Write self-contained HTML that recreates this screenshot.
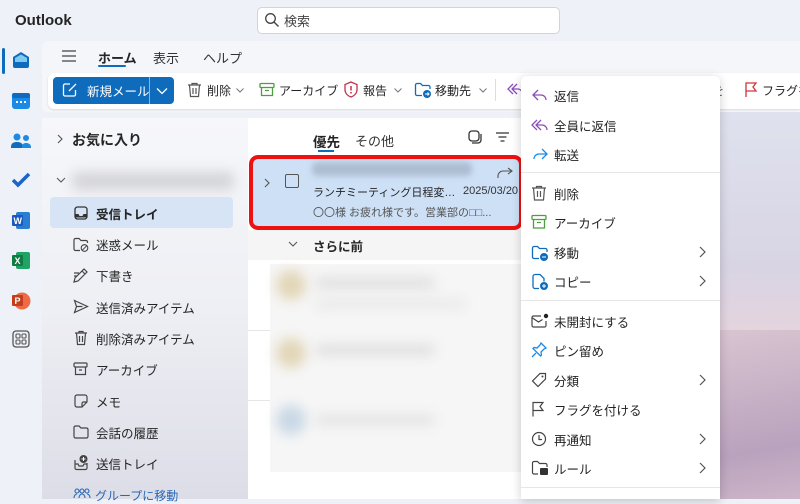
<!DOCTYPE html>
<html><head><meta charset="utf-8">
<style>
*{box-sizing:border-box;margin:0;padding:0}
body{width:800px;height:499px;overflow:hidden;position:relative;background:#eef1f7;font-family:"Liberation Sans","Noto Sans CJK JP",sans-serif;color:#242424;font-size:13px}
.a{position:absolute}
.ic{position:absolute}
.fold{position:absolute;left:50px;width:183px;height:30px;font-size:12.5px;display:flex;align-items:center;padding-left:46px}
.mi{position:absolute;left:0;width:199px;height:30px;display:flex;align-items:center;padding-left:33px;font-size:12.5px}
.mi svg{position:absolute;left:10px;top:7px}
.chev{position:absolute;right:14px;top:9px}
.blur{position:absolute;filter:blur(6px);border-radius:6px}
</style></head><body>
<div class="a" style="left:720px;top:110px;width:80px;height:389px;background:linear-gradient(180deg,#dfe2ee 0%,#d8d4e4 40%,#e6d4dc 60%,#c9cbd9 75%,#d7c3d3 100%)"></div>
<div class="a" style="left:720px;top:330px;width:80px;height:169px;background:linear-gradient(170deg,#d9c4d1,#b9a2bd 70%,#cdb6c9)"></div>
<div class="a" style="left:15px;top:12px;font-size:15px;font-weight:bold;color:#242424">Outlook</div>
<div class="a" style="left:257px;top:7px;width:303px;height:27px;background:#fff;border:1px solid #cfd3da;border-radius:5px"></div>
<svg class="ic" style="left:264px;top:12px" width="16" height="16" viewBox="0 0 16 16"><circle cx="6.5" cy="6.5" r="4.8" fill="none" stroke="#444" stroke-width="1.3"/><path d="M10 10l4.5 4.5" stroke="#444" stroke-width="1.4"/></svg>
<div class="a" style="left:284px;top:11px;font-size:13px;color:#444">検索</div>
<div class="a" style="left:2px;top:48px;width:3px;height:26px;background:#0f6cbd;border-radius:2px"></div>
<svg class="ic" style="left:10px;top:49px" width="22" height="22" viewBox="0 0 22 22"><path d="M3 8l8-5 8 5v9a2 2 0 0 1-2 2H5a2 2 0 0 1-2-2z" fill="#0f6cbd"/><path d="M5 9l6-3.5 6 3.5v4H5z" fill="#7fcaf0"/></svg>
<svg class="ic" style="left:11px;top:91px" width="20" height="20"><rect x="1" y="2" width="18" height="16" rx="3" fill="#1b8ae6"/><rect x="1" y="2" width="18" height="5" rx="2" fill="#0f6cbd"/><g fill="#fff"><rect x="5" y="10" width="2" height="2"/><rect x="9" y="10" width="2" height="2"/><rect x="13" y="10" width="2" height="2"/></g></svg>
<svg class="ic" style="left:10px;top:131px" width="22" height="20"><circle cx="7" cy="6" r="3.5" fill="#1b8ae6"/><circle cx="16" cy="7" r="3" fill="#1b8ae6"/><path d="M1 16c0-4 3-5 6-5s6 1 6 5v1H1z" fill="#0f6cbd"/><path d="M12 16c0-3 2-4 4-4s5 1 5 4v1h-9z" fill="#1b8ae6"/></svg>
<svg class="ic" style="left:11px;top:172px" width="20" height="16"><path d="M2 8l5 5L18 2" fill="none" stroke="#1b64c8" stroke-width="3.5"/></svg>
<svg class="ic" style="left:11px;top:211px" width="20" height="19"><rect x="5" y="1" width="14" height="17" rx="2" fill="#2b7cd3"/><rect x="1" y="4" width="11" height="11" rx="1" fill="#185abd"/><text x="2.5" y="13" font-size="9" font-weight="bold" fill="#fff" font-family="Liberation Sans">W</text></svg>
<svg class="ic" style="left:11px;top:251px" width="20" height="19"><rect x="5" y="1" width="14" height="17" rx="2" fill="#21a366"/><rect x="1" y="4" width="11" height="11" rx="1" fill="#107c41"/><text x="3.5" y="13" font-size="9" font-weight="bold" fill="#fff" font-family="Liberation Sans">X</text></svg>
<svg class="ic" style="left:11px;top:291px" width="20" height="19"><circle cx="11" cy="10" r="8.5" fill="#ed6c47"/><rect x="1" y="4" width="11" height="11" rx="1" fill="#c43e1c"/><text x="3.5" y="13" font-size="9" font-weight="bold" fill="#fff" font-family="Liberation Sans">P</text></svg>
<svg class="ic" style="left:12px;top:330px" width="18" height="18"><rect x="1" y="1" width="16" height="16" rx="3" fill="none" stroke="#555" stroke-width="1.3"/><g fill="none" stroke="#555" stroke-width="1.1"><rect x="4" y="4" width="4" height="4" rx="1"/><rect x="10" y="4" width="4" height="4" rx="1"/><rect x="4" y="10" width="4" height="4" rx="1"/><rect x="10" y="10" width="4" height="4" rx="1"/></g></svg>
<div class="a" style="left:42px;top:41px;width:758px;height:71px;background:#f4f6fa;border-radius:6px 0 0 6px"></div>
<svg class="ic" style="left:61px;top:49px" width="16" height="14"><path d="M1 2h14M1 7h14M1 12h14" stroke="#444" stroke-width="1.3"/></svg>
<div class="a" style="left:98px;top:48px;font-size:13px;font-weight:bold">ホーム</div>
<div class="a" style="left:98px;top:65px;width:28px;height:2px;background:#0f6cbd;border-radius:1px"></div>
<div class="a" style="left:153px;top:48px;font-size:13px;color:#333">表示</div>
<div class="a" style="left:203px;top:48px;font-size:13px;color:#333">ヘルプ</div>
<div class="a" style="left:48px;top:73px;width:752px;height:36px;background:#fff;border-radius:6px 0 0 6px;box-shadow:0 1px 2px rgba(0,0,0,.12)"></div>
<div class="a" style="left:53px;top:77px;width:121px;height:27px;background:#0f6cbd;border-radius:4px"></div>
<div class="a" style="left:149px;top:77px;width:1px;height:27px;background:#8ab4de"></div>
<svg class="ic" style="left:62px;top:82px" width="16" height="16"><path d="M8 2H3a1.5 1.5 0 0 0-1.5 1.5v9A1.5 1.5 0 0 0 3 14h9a1.5 1.5 0 0 0 1.5-1.5V8M7 9l7-7" fill="none" stroke="#fff" stroke-width="1.3"/></svg>
<div class="a" style="left:87px;top:81px;color:#fff;font-size:12.5px">新規メール</div>
<svg class="ic" style="left:156px;top:87px" width="12" height="8"><path d="M1 1.5l5 5 5-5" fill="none" stroke="#fff" stroke-width="1.3"/></svg>
<svg class="ic" style="left:187px;top:82px" width="15" height="16"><path d="M1 3h13M5 3V1.5h5V3M2.5 3l1 11.5h8l1-11.5M6 6v6M9 6v6" fill="none" stroke="#555" stroke-width="1.2"/></svg>
<div class="a" style="left:207px;top:82px;font-size:12px">削除</div>
<svg class="ic" style="left:236px;top:88px" width="8" height="5"><path d="M.5.5l3.5 3.5L7.5.5" fill="none" stroke="#777"/></svg>
<svg class="ic" style="left:259px;top:82px" width="16" height="15"><rect x="1" y="1.5" width="14" height="4" rx="1" fill="none" stroke="#4c9e3f" stroke-width="1.3"/><path d="M2.5 5.5v8h11v-8M6 8.5h4" fill="none" stroke="#4c9e3f" stroke-width="1.3"/></svg>
<div class="a" style="left:279px;top:82px;font-size:12px">アーカイブ</div>
<svg class="ic" style="left:343px;top:81px" width="16" height="17"><path d="M8 1l6 2.5v5c0 4-3 6.5-6 7.5-3-1-6-3.5-6-7.5v-5z" fill="none" stroke="#c4314b" stroke-width="1.3"/><path d="M8 5v4.5" stroke="#c4314b" stroke-width="1.5"/><circle cx="8" cy="11.8" r=".9" fill="#c4314b"/></svg>
<div class="a" style="left:363px;top:82px;font-size:12px">報告</div>
<svg class="ic" style="left:394px;top:88px" width="8" height="5"><path d="M.5.5l3.5 3.5L7.5.5" fill="none" stroke="#777"/></svg>
<svg class="ic" style="left:414px;top:81px" width="18" height="18"><path d="M1.5 4a1.5 1.5 0 0 1 1.5-1.5h3.5l2 2h6A1.5 1.5 0 0 1 16 6v2M1.5 4v9a1.5 1.5 0 0 0 1.5 1.5h5" fill="none" stroke="#0f6cbd" stroke-width="1.3"/><circle cx="13" cy="13" r="4" fill="#0f6cbd"/><path d="M11 13h4M13.5 11.5l1.5 1.5-1.5 1.5" stroke="#fff" fill="none" stroke-width="1"/></svg>
<div class="a" style="left:435px;top:82px;font-size:12px">移動先</div>
<svg class="ic" style="left:479px;top:88px" width="8" height="5"><path d="M.5.5l3.5 3.5L7.5.5" fill="none" stroke="#777"/></svg>
<div class="a" style="left:495px;top:79px;width:1px;height:22px;background:#ddd"></div>
<svg class="ic" style="left:505px;top:82px" width="18" height="14"><path d="M8 2L3 7l5 5M12 2L7 7l5 5M7 7h6a4 4 0 0 1 4 4v2" fill="none" stroke="#8a4fba" stroke-width="1.3"/></svg>
<div class="a" style="left:712px;top:82px;font-size:12px;color:#333">を</div>
<svg class="ic" style="left:744px;top:81px" width="14" height="17"><path d="M2 16V2h10l-3 4 3 4H2" fill="none" stroke="#d13438" stroke-width="1.3"/></svg>
<div class="a" style="left:762px;top:82px;font-size:12px;white-space:nowrap">フラグを設</div>
<div class="a" style="left:42px;top:118px;width:206px;height:381px;background:linear-gradient(180deg,#f6f7fa 0%,#eeeff4 50%,#dcdde7 100%)"></div>
<svg class="ic" style="left:57px;top:134px" width="7" height="10"><path d="M1 1l4 4-4 4" fill="none" stroke="#555" stroke-width="1.1"/></svg>
<div class="a" style="left:72px;top:130px;font-size:14px;font-weight:bold">お気に入り</div>
<svg class="ic" style="left:56px;top:177px" width="10" height="7"><path d="M1 1l4 4 4-4" fill="none" stroke="#555" stroke-width="1.1"/></svg>
<div class="blur" style="left:72px;top:172px;width:162px;height:18px;background:#d4d4d8"></div>
<div class="a" style="left:50px;top:197px;width:183px;height:31px;background:#d6e4f6;border-radius:4px"></div>
<div class="fold" style="top:198px;font-weight:bold">受信トレイ</div>
<svg class="ic" style="left:74px;top:206px" width="14" height="14"><rect x="1" y="1" width="12" height="12" rx="2.5" fill="none" stroke="#333" stroke-width="1.3"/><path d="M1.5 8h3l1 2h3l1-2h3v3.5h-11z" fill="#333"/></svg>
<div class="fold" style="top:229px">迷惑メール</div>
<svg class="ic" style="left:73px;top:237px" width="16" height="15"><path d="M1 3a1.5 1.5 0 0 1 1.5-1.5H6l2 2h5a1.5 1.5 0 0 1 1.5 1.5v1M1 3v9a1.5 1.5 0 0 0 1.5 1.5H7" fill="none" stroke="#444" stroke-width="1.2"/><circle cx="11.5" cy="11" r="3.3" fill="none" stroke="#444" stroke-width="1.1"/><path d="M9.2 13.3l4.6-4.6" stroke="#444"/></svg>
<div class="fold" style="top:260px">下書き</div>
<svg class="ic" style="left:73px;top:268px" width="16" height="15"><path d="M1 14L2 10 11 1l3 3-9 9zM9 3l3 3M1 5h5M1 8h3" fill="none" stroke="#444" stroke-width="1.2"/></svg>
<div class="fold" style="top:292px">送信済みアイテム</div>
<svg class="ic" style="left:73px;top:299px" width="16" height="15"><path d="M1.5 1.5l13 6-13 6 2-6zM3.5 7.5h6" fill="none" stroke="#444" stroke-width="1.2"/></svg>
<div class="fold" style="top:323px">削除済みアイテム</div>
<svg class="ic" style="left:74px;top:330px" width="14" height="16"><path d="M1 3h12M5 3V1.5h4V3M2.5 3l1 11.5h7l1-11.5M5.5 6v6M8.5 6v6" fill="none" stroke="#444" stroke-width="1.2"/></svg>
<div class="fold" style="top:354px">アーカイブ</div>
<svg class="ic" style="left:73px;top:362px" width="15" height="14"><rect x="1" y="1" width="13" height="4" rx="1" fill="none" stroke="#444" stroke-width="1.2"/><path d="M2.5 5v7.5h10V5M6 8h3" fill="none" stroke="#444" stroke-width="1.2"/></svg>
<div class="fold" style="top:386px">メモ</div>
<svg class="ic" style="left:74px;top:394px" width="14" height="14"><path d="M13 8V3a2 2 0 0 0-2-2H3a2 2 0 0 0-2 2v8a2 2 0 0 0 2 2h5zM8 13V9.5A1.5 1.5 0 0 1 9.5 8H13" fill="none" stroke="#444" stroke-width="1.2"/></svg>
<div class="fold" style="top:417px">会話の履歴</div>
<svg class="ic" style="left:73px;top:425px" width="16" height="14"><path d="M1 2.5A1.5 1.5 0 0 1 2.5 1H6l2 2h5.5A1.5 1.5 0 0 1 15 4.5v7a1.5 1.5 0 0 1-1.5 1.5h-11A1.5 1.5 0 0 1 1 11.5z" fill="none" stroke="#444" stroke-width="1.2"/></svg>
<div class="fold" style="top:448px">送信トレイ</div>
<svg class="ic" style="left:73px;top:454px" width="16" height="17"><path d="M2 6v8a1.5 1.5 0 0 0 1.5 1.5h9A1.5 1.5 0 0 0 14 14V9M2 10h3l1 2h4l1-2h3" fill="none" stroke="#444" stroke-width="1.2"/><circle cx="10.5" cy="5" r="4" fill="#444"/><path d="M10.5 3v4M8.5 5h4" stroke="#fff"/></svg>
<div class="a" style="left:95px;top:487px;font-size:12px;color:#2a68b5">グループに移動</div>
<svg class="ic" style="left:73px;top:488px" width="18" height="11"><g fill="none" stroke="#2a68b5" stroke-width="1.1"><circle cx="4" cy="3" r="2"/><circle cx="9" cy="3" r="2"/><circle cx="14" cy="3" r="2"/><path d="M1 10c0-3 2-4 3-4M6 10c0-3 2-4 3-4s3 1 3 4M17 10c0-3-2-4-3-4"/></g></svg>
<div class="a" style="left:248px;top:118px;width:273px;height:381px;background:#fff"></div>
<div class="a" style="left:313px;top:131px;font-size:13.5px;font-weight:bold">優先</div>
<div class="a" style="left:318px;top:150px;width:16px;height:2px;background:#0f6cbd"></div>
<div class="a" style="left:355px;top:131px;font-size:13px;color:#333">その他</div>
<svg class="ic" style="left:468px;top:130px" width="14" height="14"><rect x="1" y="1" width="10" height="10" rx="3" fill="none" stroke="#333" stroke-width="1.3"/><path d="M13 4v6a3 3 0 0 1-3 3H4" fill="none" stroke="#333" stroke-width="1.3"/></svg>
<svg class="ic" style="left:496px;top:132px" width="13" height="10"><path d="M0 1h13M2.5 5h8M4.5 9h4" stroke="#333" stroke-width="1.2"/></svg>
<div class="a" style="left:253px;top:159px;width:266px;height:67px;background:#cde0f6"></div>
<div class="blur" style="left:312px;top:162px;width:160px;height:14px;background:#aebdd2;filter:blur(3px)"></div>
<svg class="ic" style="left:264px;top:178px" width="7" height="10"><path d="M1 1l4 4-4 4" fill="none" stroke="#555" stroke-width="1.1"/></svg>
<div class="a" style="left:285px;top:174px;width:14px;height:14px;border:1.3px solid #555;border-radius:2px"></div>
<svg class="ic" style="left:497px;top:167px" width="16" height="12"><path d="M1 11V9a5 5 0 0 1 5-5h9M11 1l4 3-4 3" fill="none" stroke="#555" stroke-width="1.1"/></svg>
<div class="a" style="left:313px;top:184px;width:145px;overflow:hidden;font-size:11px;white-space:nowrap;text-overflow:ellipsis">ランチミーティング日程変更...</div>
<div class="a" style="left:463px;top:185px;font-size:11px;color:#333">2025/03/20</div>
<div class="a" style="left:313px;top:204px;font-size:11px;color:#555;white-space:nowrap">〇〇様 お疲れ様です。営業部の□□...</div>
<div class="a" style="left:249px;top:155px;width:274px;height:75px;border:4px solid #ee1111;border-radius:9px"></div>
<div class="a" style="left:248px;top:230px;width:273px;height:30px;background:#f5f5f5"></div>
<svg class="ic" style="left:288px;top:241px" width="10" height="7"><path d="M1 1l4 4 4-4" fill="none" stroke="#555" stroke-width="1.1"/></svg>
<div class="a" style="left:313px;top:236px;font-size:12.5px;font-weight:bold">さらに前</div>
<div class="a" style="left:270px;top:264px;width:251px;height:208px;background:#f6f6f6"></div>
<div class="blur" style="left:276px;top:270px;width:30px;height:30px;background:#e2d6b8;border-radius:50%"></div>
<div class="blur" style="left:315px;top:278px;width:120px;height:10px;background:#ddd"></div>
<div class="blur" style="left:315px;top:300px;width:150px;height:8px;background:#e6e6e6"></div>
<div class="blur" style="left:276px;top:338px;width:30px;height:30px;background:#e2d6b8;border-radius:50%"></div>
<div class="blur" style="left:315px;top:345px;width:120px;height:10px;background:#ddd"></div>
<div class="blur" style="left:276px;top:405px;width:30px;height:30px;background:#c9d8e6;border-radius:50%"></div>
<div class="blur" style="left:315px;top:415px;width:120px;height:10px;background:#e2e2e2"></div>
<div class="a" style="left:248px;top:330px;width:22px;height:1px;background:#e6e6e6"></div>
<div class="a" style="left:248px;top:400px;width:22px;height:1px;background:#e6e6e6"></div>
<div class="a" style="left:521px;top:76px;width:199px;height:423px;background:#fff;border-radius:6px 6px 0 0;box-shadow:0 2px 10px rgba(0,0,0,.2)">
 <div class="mi" style="top:4px"><svg width="18" height="16"><path d="M7 3L2 8l5 5M2 8h8a5 5 0 0 1 5 5" fill="none" stroke="#8a4fba" stroke-width="1.3"/></svg>返信</div>
 <div class="mi" style="top:34px"><svg width="18" height="16"><path d="M6 3L1 8l5 5M10 3L5 8l5 5M5 8h6a5 5 0 0 1 5 5" fill="none" stroke="#8a4fba" stroke-width="1.3"/></svg>全員に返信</div>
 <div class="mi" style="top:63px"><svg width="18" height="16"><path d="M11 3l5 5-5 5M16 8H8a5 5 0 0 0-5 5" fill="none" stroke="#1b8ae6" stroke-width="1.3"/></svg>転送</div>
 <div class="a" style="left:0;top:96px;width:199px;height:1px;background:#e6e6e6"></div>
 <div class="mi" style="top:102px"><svg width="16" height="16"><path d="M1 3h14M5.5 3V1.5h5V3M2.5 3l1 12h9l1-12M6.5 6v6M9.5 6v6" fill="none" stroke="#555" stroke-width="1.2"/></svg>削除</div>
 <div class="mi" style="top:131px"><svg width="16" height="16"><rect x="1" y="1.5" width="14" height="4" rx="1" fill="none" stroke="#4c9e3f" stroke-width="1.3"/><path d="M2.5 5.5v8.5h11V5.5M6 8.5h4" fill="none" stroke="#4c9e3f" stroke-width="1.3"/></svg>アーカイブ</div>
 <div class="mi" style="top:161px"><svg width="18" height="18"><path d="M1.5 4a1.5 1.5 0 0 1 1.5-1.5h3.5l2 2h6A1.5 1.5 0 0 1 16 6v2M1.5 4v9a1.5 1.5 0 0 0 1.5 1.5h5" fill="none" stroke="#0f6cbd" stroke-width="1.3"/><circle cx="13" cy="13" r="4" fill="#0f6cbd"/><path d="M11 13h4" stroke="#fff"/></svg>移動<svg class="chev" style="left:auto;top:9px" width="7" height="12"><path d="M1 1l5 5-5 5" fill="none" stroke="#555" stroke-width="1.2"/></svg></div>
 <div class="mi" style="top:190px"><svg width="18" height="18"><path d="M4 1.5h5l4 4v3M4 1.5a2 2 0 0 0-2 2v10a2 2 0 0 0 2 2h4" fill="none" stroke="#0f6cbd" stroke-width="1.3"/><circle cx="13" cy="13" r="4" fill="#0f6cbd"/><path d="M11 13h4M13 11v4" stroke="#fff"/></svg>コピー<svg class="chev" style="left:auto;top:9px" width="7" height="12"><path d="M1 1l5 5-5 5" fill="none" stroke="#555" stroke-width="1.2"/></svg></div>
 <div class="a" style="left:0;top:224px;width:199px;height:1px;background:#e6e6e6"></div>
 <div class="mi" style="top:230px"><svg width="18" height="16"><path d="M10 3H2.5A1.5 1.5 0 0 0 1 4.5v8A1.5 1.5 0 0 0 2.5 14h11a1.5 1.5 0 0 0 1.5-1.5V8M1.5 5l6 4 4-2.5" fill="none" stroke="#444" stroke-width="1.2"/><circle cx="15" cy="3" r="2.2" fill="#222"/></svg>未開封にする</div>
 <div class="mi" style="top:259px"><svg width="16" height="16"><path d="M10 1l5 5-2 1-3 3 .5 3-1 1L2 6.5l1-1 3 .5 3-3zM5 11l-4 4" fill="none" stroke="#1b8ae6" stroke-width="1.3"/></svg>ピン留め</div>
 <div class="mi" style="top:289px"><svg width="16" height="16"><path d="M9 1.5h5.5V7L7 14.5 1.5 9z" fill="none" stroke="#444" stroke-width="1.2"/><circle cx="11.5" cy="4.5" r="1" fill="#444"/></svg>分類<svg class="chev" style="left:auto;top:9px" width="7" height="12"><path d="M1 1l5 5-5 5" fill="none" stroke="#555" stroke-width="1.2"/></svg></div>
 <div class="mi" style="top:318px"><svg width="14" height="16"><path d="M2 15.5V1.5h10l-3 4 3 4H2" fill="none" stroke="#444" stroke-width="1.2"/></svg>フラグを付ける</div>
 <div class="mi" style="top:348px"><svg width="16" height="16"><circle cx="8" cy="8" r="6.5" fill="none" stroke="#444" stroke-width="1.2"/><path d="M8 4v4.5h3" fill="none" stroke="#444" stroke-width="1.2"/></svg>再通知<svg class="chev" style="left:auto;top:9px" width="7" height="12"><path d="M1 1l5 5-5 5" fill="none" stroke="#555" stroke-width="1.2"/></svg></div>
 <div class="mi" style="top:377px"><svg width="18" height="16"><path d="M1.5 3a1.5 1.5 0 0 1 1.5-1.5h3.5l2 2h6A1.5 1.5 0 0 1 16 5v2M1.5 3v9.5A1.5 1.5 0 0 0 3 14h4" fill="none" stroke="#444" stroke-width="1.2"/><rect x="9" y="8" width="8" height="7" rx="1" fill="#333"/></svg>ルール<svg class="chev" style="left:auto;top:9px" width="7" height="12"><path d="M1 1l5 5-5 5" fill="none" stroke="#555" stroke-width="1.2"/></svg></div>
 <div class="a" style="left:0;top:411px;width:199px;height:1px;background:#e6e6e6"></div>
</div>
</body></html>
